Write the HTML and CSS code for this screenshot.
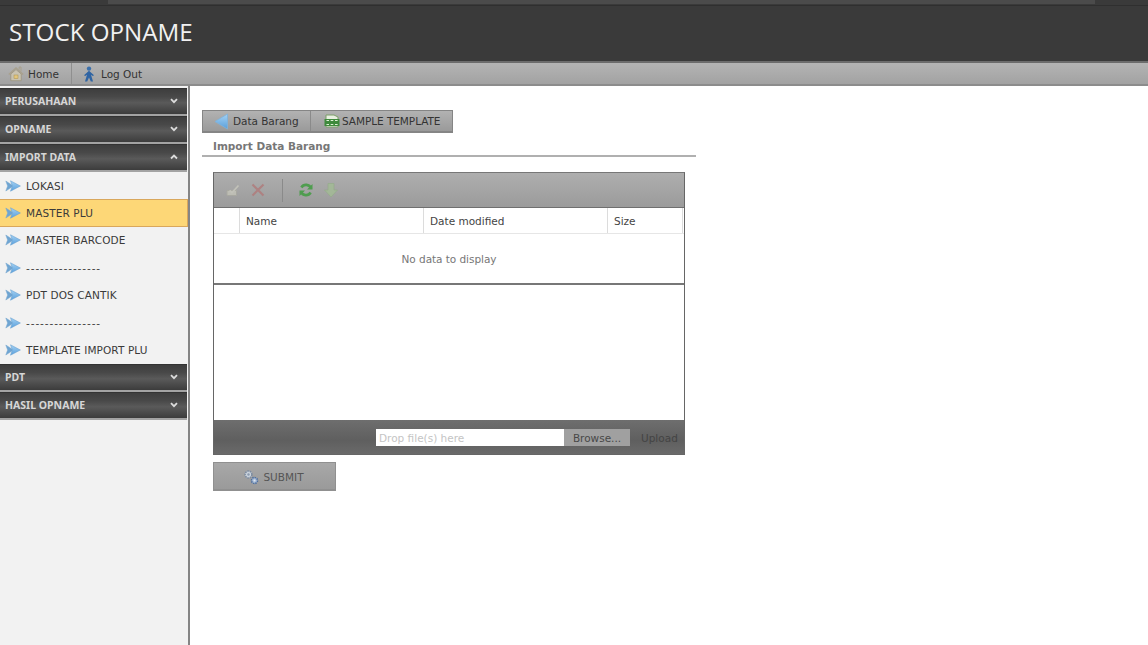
FILE: index.html
```html
<!DOCTYPE html>
<html lang="id">
<head>
<meta charset="utf-8">
<title>Stock Opname</title>
<link rel="stylesheet" href="styles.css">
</head>
<body>
<svg class="defs" width="0" height="0" aria-hidden="true">
  <defs>
    <linearGradient id="arrowBlue" x1="0" y1="0" x2="0" y2="1">
      <stop offset="0" stop-color="#a4d2f4"/><stop offset="1" stop-color="#5a9fdb"/>
    </linearGradient>
    <symbol id="go" viewBox="0 0 16 12">
      <path d="M.8 1 L8.5 6 L.8 11 L2.6 6 Z" fill="#6fa5d2" stroke="#78a8d0" stroke-width=".5"/>
      <path d="M5.5 .8 L15.4 6 L5.5 11.2 L7.4 6 Z" fill="url(#arrowBlue)" stroke="#6da5d3" stroke-width=".6"/>
    </symbol>
    <symbol id="chev" viewBox="0 0 8 6">
      <path d="M1 1.2 L4 4.2 L7 1.2" fill="none" stroke="#dcdcdc" stroke-width="1.8"/>
    </symbol>
    <symbol id="chevup" viewBox="0 0 8 6">
      <path d="M1 4.5 L4 1.5 L7 4.5" fill="none" stroke="#dcdcdc" stroke-width="1.8"/>
    </symbol>
  </defs>
</svg>

<div class="topstrip"><div class="topstrip-light"></div></div>
<header class="banner"><h1 class="brand">STOCK OPNAME</h1></header>
<nav class="menubar">
  <a class="menu-link menu-home">
    <svg class="ico16" viewBox="0 0 16 16"><path d="M.8 8.5 L8 1.8 L15.2 8.5" fill="none" stroke="#a8a08c" stroke-width="1.3"/><path d="M11.2 3.5 V1 H13 V5.5" fill="none" stroke="#a8a08c"/><path d="M2.8 8 L8 3.5 L13.2 8 V14.7 H2.8 Z" fill="#c9c3b1" stroke="#9a937f" stroke-width=".8"/><rect x="6" y="9" width="4" height="3.6" fill="#e3c67c" stroke="#a8904e" stroke-width=".5"/></svg>
    Home</a>
  <a class="menu-link">
    <svg class="ico16" viewBox="0 0 16 16"><circle cx="8" cy="2.6" r="2.2" fill="#3b70ab"/><path d="M8 4.8 L3 9.3 L4.2 10 L6 8.8 L4 15.6 H6.2 L8 11.5 L9.8 15.6 H12 L10 8.8 L11.8 10 L13 9.3 Z" fill="#2f64a3"/></svg>
    Log Out</a>
</nav>

<div class="layout">
  <aside class="sidebar">
    <div class="head"><span>PERUSAHAAN</span><svg class="chev"><use href="#chev"/></svg></div>
    <div class="head"><span>OPNAME</span><svg class="chev"><use href="#chev"/></svg></div>
    <div class="head"><span>IMPORT DATA</span><svg class="chev"><use href="#chevup"/></svg></div>
    <ul class="items">
      <li class="item"><svg class="go"><use href="#go"/></svg>LOKASI</li>
      <li class="item item-active"><svg class="go"><use href="#go"/></svg>MASTER PLU</li>
      <li class="item"><svg class="go"><use href="#go"/></svg>MASTER BARCODE</li>
      <li class="item"><svg class="go"><use href="#go"/></svg><span class="dashes">----------------</span></li>
      <li class="item"><svg class="go"><use href="#go"/></svg>PDT DOS CANTIK</li>
      <li class="item"><svg class="go"><use href="#go"/></svg><span class="dashes">----------------</span></li>
      <li class="item"><svg class="go"><use href="#go"/></svg>TEMPLATE IMPORT PLU</li>
    </ul>
    <div class="head"><span>PDT</span><svg class="chev"><use href="#chev"/></svg></div>
    <div class="head"><span>HASIL OPNAME</span><svg class="chev"><use href="#chev"/></svg></div>
  </aside>

  <main class="content">
    <div class="tabs">
      <a class="tab tab-back"><svg class="ico-back" viewBox="0 0 15 17"><path d="M13.5 1 V16 L1 8.5 Z" fill="url(#arrowBlue)" stroke="#7db2dc" stroke-width=".8"/></svg>Data Barang</a>
      <a class="tab tab-sample"><svg class="ico-xls" viewBox="0 0 16 14"><path d="M2 1 H10 L14 3 V13 H2 Z" fill="#e8efe0" stroke="#7d9f6a"/><rect x=".5" y="5" width="15" height="7" fill="#3f8a3c"/><path d="M2.5 6.5h2.5M2.5 10.5h2.5M6.7 6.5h2.6M6.7 10.5h2.6M11 6.5h2.6M11 10.5h2.6" stroke="#dff0d6" stroke-width="1.1"/></svg>SAMPLE TEMPLATE</a>
    </div>
    <h2 class="title">Import Data Barang</h2>

    <section class="uploader">
      <div class="up-tools">
        <svg class="tool dim" viewBox="0 0 16 16"><path d="M2 8.5 H11.5 V13.5 H2 Z" fill="#c2c2b8" stroke="#aaaaa0"/><path d="M4.5 8.5 L7 10.5 L13.5 3.5" fill="none" stroke="#c8c8bd" stroke-width="1.7"/></svg>
        <svg class="tool dim" viewBox="0 0 16 16"><path d="M2.5 2.5 L13.5 13.5 M13.5 2.5 L2.5 13.5" stroke="#b07c7c" stroke-width="2.1"/></svg>
        <span class="tool-sep"></span>
        <svg class="tool" viewBox="0 0 16 16"><path d="M13 6.5 A5.3 5.3 0 0 0 3.4 5.5 M3 9.5 A5.3 5.3 0 0 0 12.6 10.5" fill="none" stroke="#4f9d4f" stroke-width="2.6"/><path d="M14.5 2 V7.5 H9 Z M1.5 14 V8.5 H7 Z" fill="#4f9d4f"/></svg>
        <svg class="tool dim" viewBox="0 0 16 16"><path d="M5 1.5 H11 V8 H14.5 L8 15 L1.5 8 H5 Z" fill="#a3bb96" stroke="#92ad86" stroke-width=".7"/></svg>
      </div>
      <div class="up-grid">
        <span class="cell cell-check"></span>
        <span class="cell cell-name">Name</span>
        <span class="cell cell-date">Date modified</span>
        <span class="cell cell-size">Size</span>
      </div>
      <div class="up-empty">No data to display</div>
      <div class="up-space"></div>
      <div class="up-foot">
        <span class="drop">Drop file(s) here</span>
        <span class="browse">Browse...</span>
        <span class="upload">Upload</span>
      </div>
    </section>

    <button class="submit" type="button">
      <svg class="ico-gear" viewBox="0 0 16 16"><circle cx="5.5" cy="5.5" r="3.4" fill="#c9d2dc" stroke="#7c8ba0" stroke-width="1.5" stroke-dasharray="1.6 .8"/><circle cx="5.5" cy="5.5" r="1.2" fill="#8c9aae"/><circle cx="11.5" cy="11.5" r="3" fill="#a8bcd6" stroke="#4f6f9f" stroke-width="1.5" stroke-dasharray="1.5 .8"/><circle cx="11.5" cy="11.5" r="1" fill="#dfe6ef"/></svg>
      SUBMIT
    </button>
  </main>
</div>
</body>
</html>
```

FILE: styles.css
```css
* { box-sizing: border-box; }
html, body { margin: 0; height: 100%; }
body {
  display: flex;
  flex-direction: column;
  height: 645px;
  overflow: hidden;
  background: #fff;
  color: #444;
  font-family: "DejaVu Sans", Verdana, sans-serif;
  font-size: 10.5px;
}
.defs { display: block; height: 0; }

.topstrip {
  height: 6px;
  background: #3a3a3a;
  border-bottom: 1px solid #2f2f2f;
}
.topstrip-light {
  height: 4px;
  margin: 0 53px 0 108px;
  background: #4b4b4b;
}
.banner {
  height: 57px;
  flex: none;
  display: flex;
  align-items: center;
  padding-left: 9px;
  background: #3a3a3a;
  border-bottom: 2px solid #6c6c6c;
}
.brand {
  margin: 0 0 5px;
  color: #f1f1f1;
  font: 400 24.2px "Open Sans", sans-serif;
}

.menubar {
  height: 23px;
  flex: none;
  display: flex;
  background: linear-gradient(#b4b4b4, #a2a2a2);
  border-bottom: 2px solid #8c8c8c;
}
.menu-link {
  display: flex;
  align-items: center;
  gap: 4px;
  padding: 0 12px 0 9px;
  color: #333;
}
.menu-home { padding: 0 12px 0 8px; border-right: 1px solid #8f8f8f; }
.ico16 { width: 16px; height: 16px; }

.layout { flex: 1; display: flex; min-height: 0; }

.sidebar {
  width: 190px;
  flex: none;
  padding-top: 2px;
  background: #f2f2f2;
  border-right: 2px solid #858585;
}
.head {
  height: 28px;
  margin-right: 1px;
  display: flex;
  align-items: center;
  justify-content: space-between;
  padding: 0 9px 1px 5px;
  color: #d6d6d6;
  font: 700 10.5px "Noto Sans", sans-serif;
  background: linear-gradient(#3e3e3e 0, #484848 30%, #5a5a5a 55%, #464646 85%, #3c3c3c 100%);
  border-top: 1px solid #333;
  border-bottom: 2px solid #a3a3a3;
}
.chev { width: 8px; height: 6px; }
.items { list-style: none; margin: 0; padding: 0; }
.item {
  height: 27.4px;
  display: flex;
  align-items: center;
  gap: 5px;
  padding-left: 5px;
  color: #3a3a3a;
  font-size: 10.5px;
  letter-spacing: .1px;
}
.item-active {
  background: #fdd777;
  border: 1px solid #d9a75c;
  border-left: 0;
}
.dashes { letter-spacing: .9px; }
.go { width: 16px; height: 12px; }

.content {
  flex: 1;
  padding: 24px 0 0 12px;
  min-width: 0;
}
.tabs {
  display: flex;
  width: 251px;
  height: 23px;
  background: linear-gradient(#b2b2b2, #9a9a9a);
  border: 1px solid #858585;
  border-bottom-width: 2px;
}
.tab {
  display: flex;
  align-items: center;
  color: #333;
  letter-spacing: -.05px;
}
.tab-back {
  width: 108px;
  padding-left: 11px;
  gap: 4px;
  border-right: 1px solid #8a8a8a;
}
.tab-sample { padding-left: 13px; gap: 2px; }
.ico-back { width: 15px; height: 17px; }
.ico-xls { width: 16px; height: 14px; }
.title {
  width: 494px;
  height: 24px;
  margin: 0;
  padding: 7px 0 0 11px;
  color: #777;
  font: 700 10.5px "DejaVu Sans", sans-serif;
  border-bottom: 2px solid #b0b0b0;
}

.uploader {
  width: 472px;
  height: 283px;
  margin: 15px 0 0 11px;
  display: flex;
  flex-direction: column;
  background: #fff;
  border: 1px solid #666;
  border-top-color: #777;
}
.up-tools {
  height: 35px;
  flex: none;
  display: flex;
  align-items: center;
  padding-left: 11px;
  gap: 9px;
  background: linear-gradient(#aeaeae, #9b9b9b);
  border-bottom: 1px solid #6f6f6f;
}
.tool { width: 16px; height: 16px; }
.dim { opacity: .85; }
.tool-sep {
  width: 1px;
  height: 23px;
  margin: 0 6px 0 7px;
  background: #8a8a8a;
}
.up-grid {
  height: 26px;
  flex: none;
  display: grid;
  grid-template-columns: 26px 184px 184px 1fr;
  border-bottom: 1px solid #e6e6e6;
}
.cell {
  display: flex;
  align-items: center;
  padding-left: 6px;
  color: #444;
  border-right: 1px solid #dcdcdc;
}
.cell-size { margin-right: 1px; }
.up-empty {
  height: 51px;
  flex: none;
  display: flex;
  align-items: center;
  justify-content: center;
  color: #777;
  letter-spacing: -.05px;
  border-bottom: 2px solid #777;
}
.up-space { flex: 1; }
.up-foot {
  height: 34px;
  flex: none;
  display: flex;
  align-items: center;
  padding: 1px 0 0 162px;
  background: linear-gradient(#6e6e6e, #5f5f5f 60%, #6a6a6a);
}
.drop {
  width: 188px;
  height: 17px;
  padding: 0 3px;
  display: flex;
  align-items: center;
  color: #c4c4c4;
  background: #fff;
}
.browse {
  width: 66px;
  height: 17px;
  display: flex;
  align-items: center;
  justify-content: center;
  color: #484848;
  background: #a0a0a0;
}
.upload { margin-left: 11px; color: #444; }

.submit {
  display: flex;
  align-items: center;
  justify-content: center;
  gap: 4px;
  width: 123px;
  height: 29px;
  margin: 7px 0 0 11px;
  padding: 1px 2px 0 0;
  color: #555;
  font: 10.5px "DejaVu Sans", sans-serif;
  background: linear-gradient(#a8a8a8, #9a9a9a);
  border: 1px solid #909090;
  border-bottom-width: 2px;
}
.ico-gear { width: 16px; height: 16px; }
```
